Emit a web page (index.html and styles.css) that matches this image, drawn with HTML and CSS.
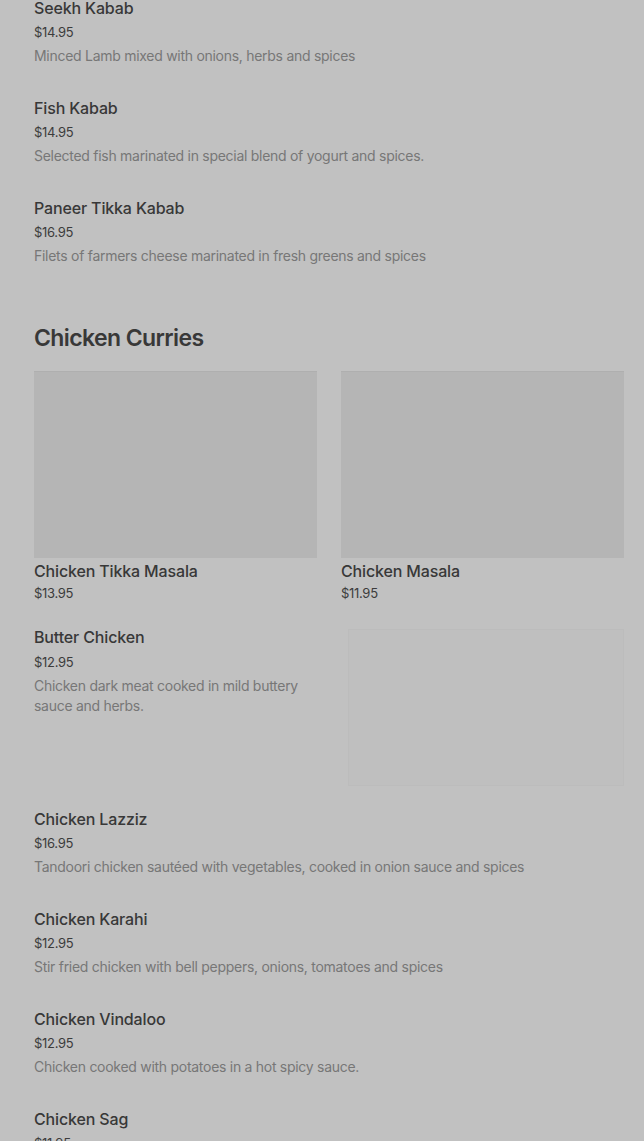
FILE: index.html
```html
<!DOCTYPE html>
<html lang="en">
<head>
    <meta charset="UTF-8">
    <meta name="viewport" content="width=device-width, initial-scale=1.0">
    <title>Menu</title>
    <link rel="stylesheet" href="styles.css">
</head>
<body>
    <div class="menu">
        <div class="item">
            <h3 class="item-name">Seekh Kabab</h3>
            <p class="item-price">$14.95</p>
            <p class="item-desc">Minced Lamb mixed with onions, herbs and spices</p>
        </div>
        <div class="item">
            <h3 class="item-name">Fish Kabab</h3>
            <p class="item-price">$14.95</p>
            <p class="item-desc">Selected fish marinated in special blend of yogurt and spices.</p>
        </div>
        <div class="item">
            <h3 class="item-name">Paneer Tikka Kabab</h3>
            <p class="item-price">$16.95</p>
            <p class="item-desc">Filets of farmers cheese marinated in fresh greens and spices</p>
        </div>

        <h2 class="section-title">Chicken Curries</h2>

        <div class="featured">
            <div class="card">
                <div class="card-photo"></div>
                <h3 class="item-name">Chicken Tikka Masala</h3>
                <p class="item-price card-price">$13.95</p>
            </div>
            <div class="card">
                <div class="card-photo"></div>
                <h3 class="item-name">Chicken Masala</h3>
                <p class="item-price card-price">$11.95</p>
            </div>
        </div>

        <div class="item item-photo">
            <div class="item-text">
                <h3 class="item-name">Butter Chicken</h3>
                <p class="item-price">$12.95</p>
                <p class="item-desc">Chicken dark meat cooked in mild buttery sauce and herbs.</p>
            </div>
            <div class="side-photo"></div>
        </div>

        <div class="item">
            <h3 class="item-name">Chicken Lazziz</h3>
            <p class="item-price">$16.95</p>
            <p class="item-desc">Tandoori chicken sautéed with vegetables, cooked in onion sauce and spices</p>
        </div>
        <div class="item">
            <h3 class="item-name">Chicken Karahi</h3>
            <p class="item-price">$12.95</p>
            <p class="item-desc">Stir fried chicken with bell peppers, onions, tomatoes and spices</p>
        </div>
        <div class="item">
            <h3 class="item-name">Chicken Vindaloo</h3>
            <p class="item-price">$12.95</p>
            <p class="item-desc">Chicken cooked with potatoes in a hot spicy sauce.</p>
        </div>
        <div class="item">
            <h3 class="item-name">Chicken Sag</h3>
            <p class="item-price">$11.95</p>
            <p class="item-desc">Chicken cooked in creamy spinach sauce.</p>
        </div>
    </div>
</body>
</html>
```

FILE: styles.css
```css
body {
    margin: 0;
    padding: 0;
    font-family: 'Inter', 'Roboto', sans-serif;
    background-color: #c1c1c1; /* pagina escurecida */
    color: #333333;
}

.menu {
    margin-top: -4px;
    padding: 0 20px 0 34px;
}

h2, h3, p {
    margin: 0;
}

.item {
    margin-bottom: 28px;
}

.item-name {
    font-size: 16px;
    line-height: 24px;
    font-weight: 500;
    letter-spacing: -0.15px;
    color: #383838;
}

.item-price {
    font-size: 13px;
    line-height: 24px;
    letter-spacing: -0.3px;
    color: #3c3c3c;
}

.item-desc {
    font-size: 14px;
    line-height: 24px;
    letter-spacing: -0.28px;
    color: #777777;
}

.section-title {
    margin: 54px 0 17px;
    font-size: 23px;
    line-height: 32px;
    font-weight: 600;
    color: #383838;
    letter-spacing: -0.6px;
}

.featured {
    display: grid;
    grid-template-columns: 1fr 1fr;
    gap: 24px;
    margin-bottom: 22px;
}

.card-photo {
    height: 187px;
    background-color: #b5b5b5;
    border-top: 1px solid #afafaf;
    box-sizing: border-box;
    margin-bottom: 1px;
}

.card-price {
    line-height: 20px;
}

.item-photo {
    display: grid;
    grid-template-columns: 1fr 276px;
    gap: 24px;
    margin-bottom: 21px;
}

.item-photo .item-price {
    line-height: 26px;
}

.item-photo .item-desc {
    line-height: 20px;
    margin-top: 1px;
}

.side-photo {
    margin-top: 4px;
    height: 155px;
    background-color: #bfbfbf;
    border: 1px solid #bcbcbc;
}
```
